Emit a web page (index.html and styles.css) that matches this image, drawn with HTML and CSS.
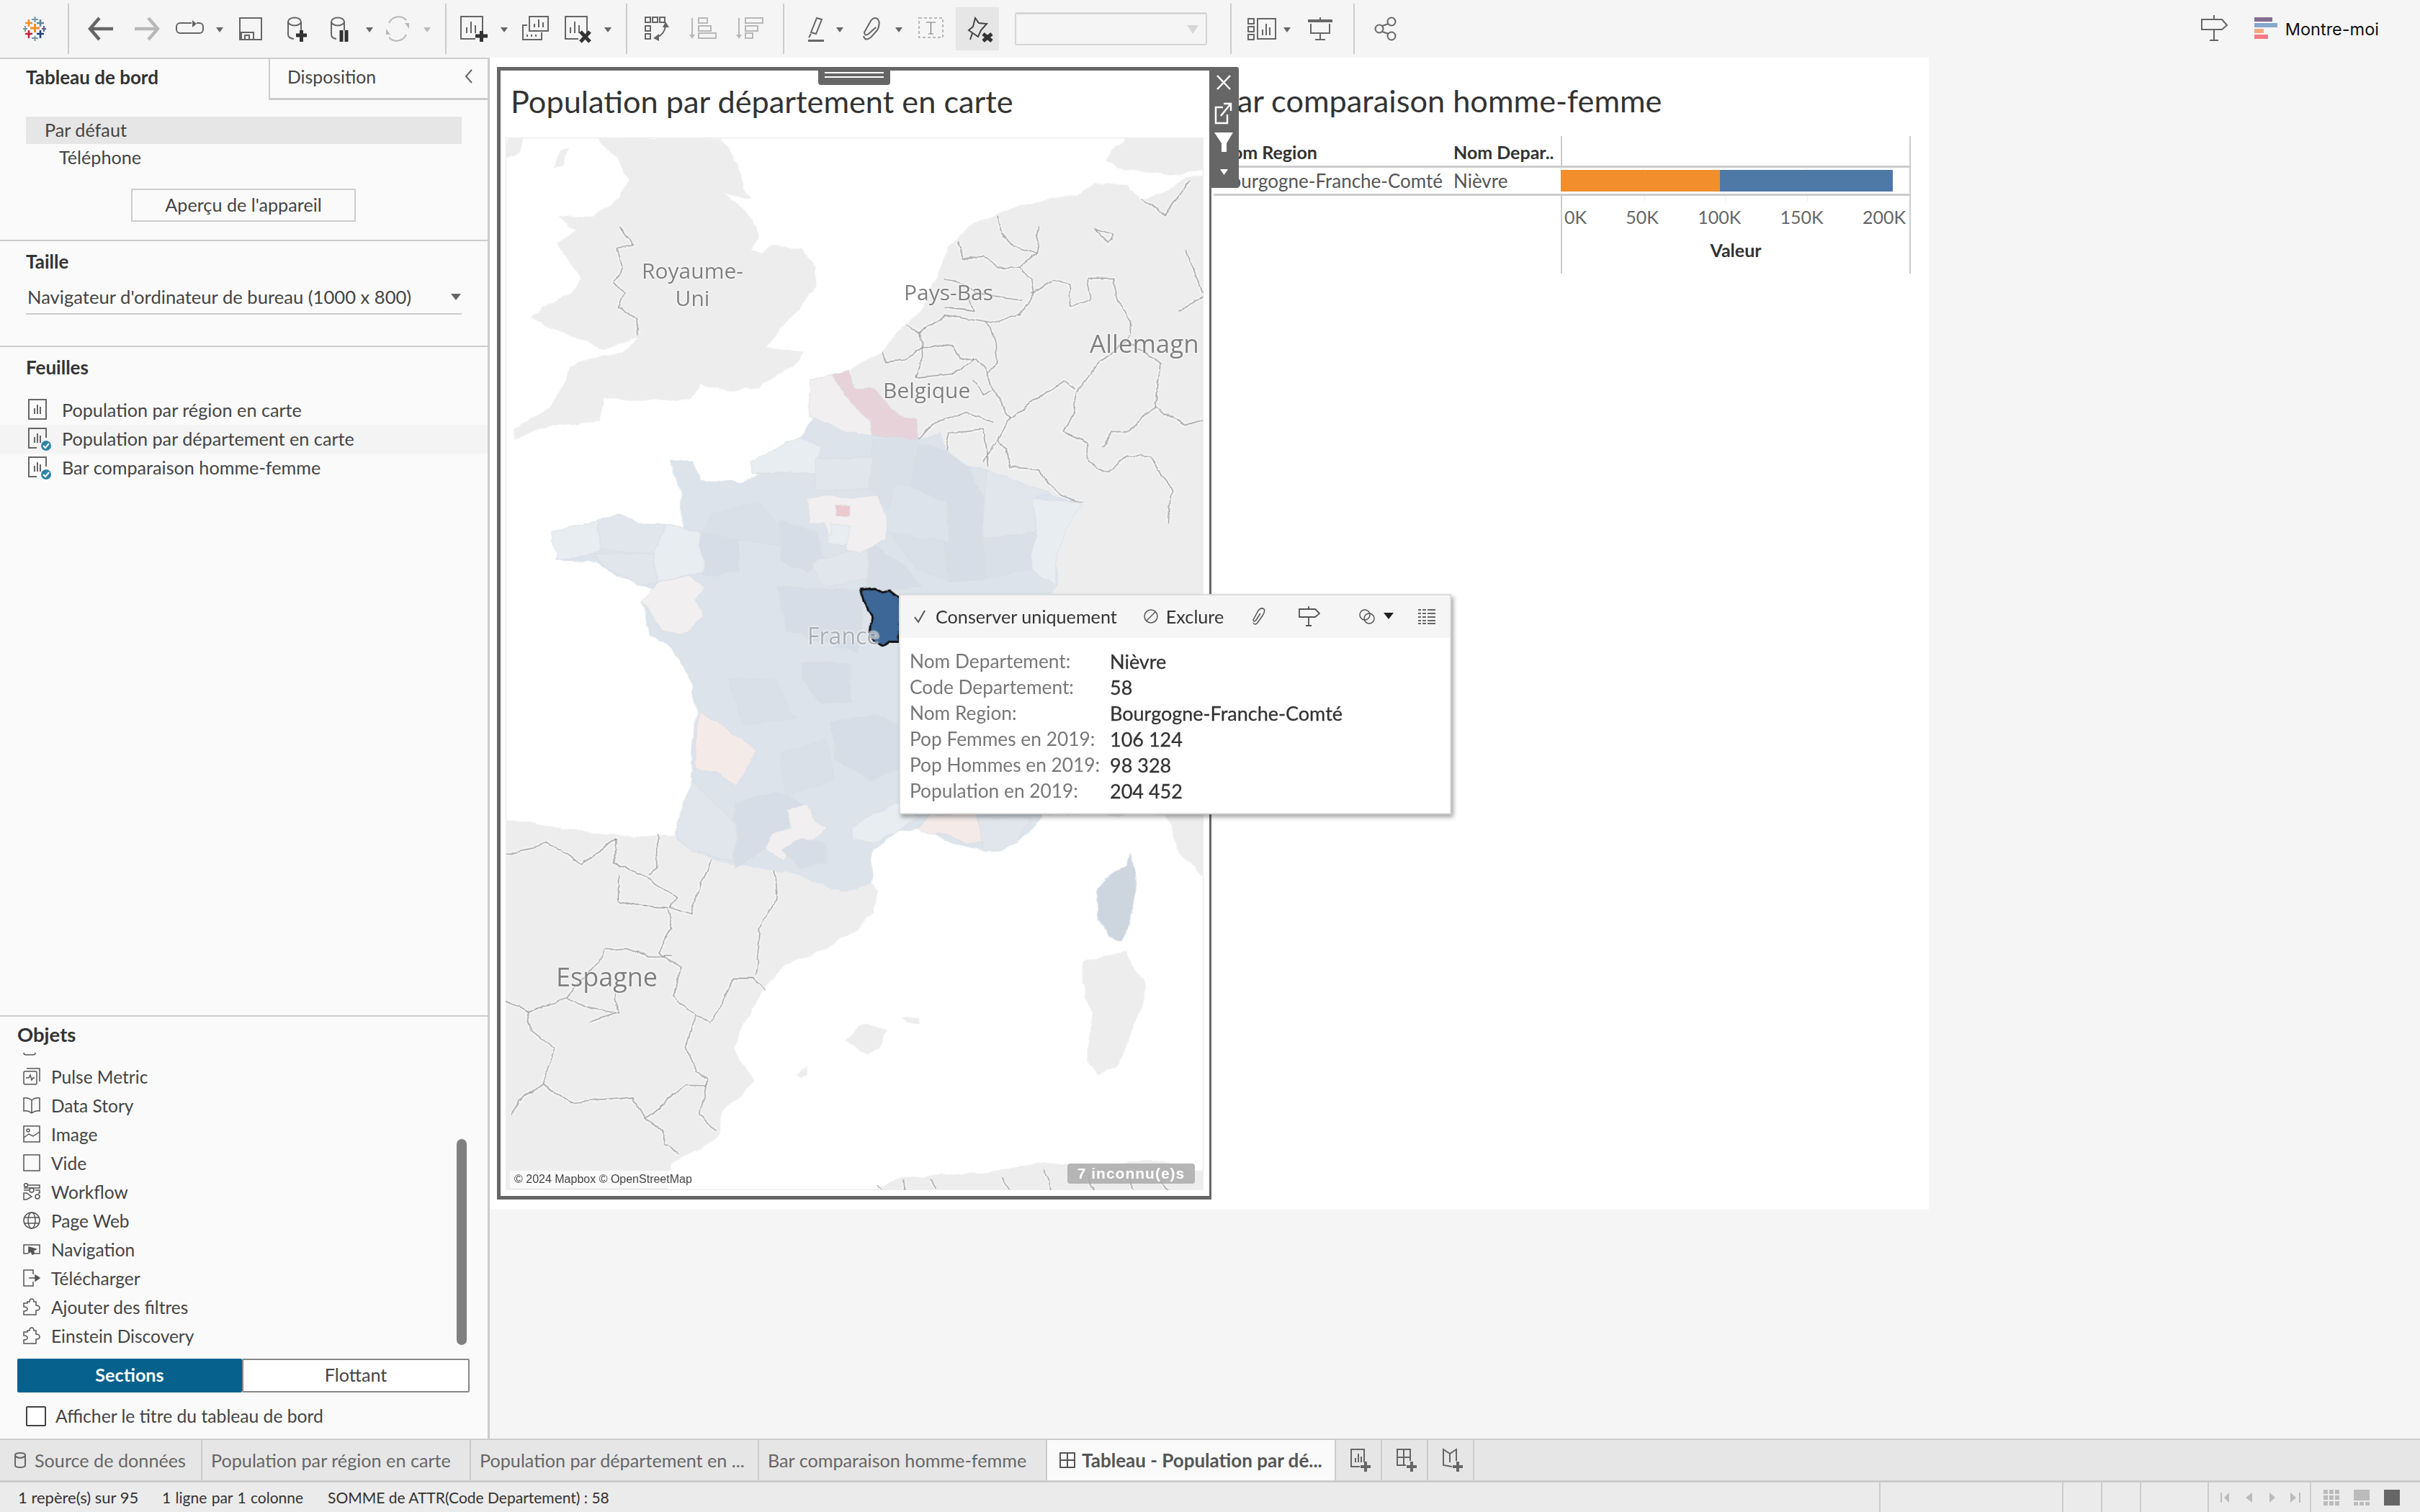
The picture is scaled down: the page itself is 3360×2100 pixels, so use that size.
FILE: index.html
```html
<!DOCTYPE html>
<html lang="fr">
<head>
    <meta charset="UTF-8">
    <title>Tableau - Population par département</title>
    <link rel="stylesheet" href="styles.css">
</head>
<body>
    <!-- barre d'outils -->
    <div class="toolbar">
        <svg width="94" height="80" viewBox="0 0 94 80">
            <path d="M42 39H55M48.500 33V45" stroke="#f28e2b" stroke-width="3" fill="none"/>
            <path d="M35 32H45M40 27V37" stroke="#f28e2b" stroke-width="2.500" fill="none"/>
            <path d="M51 32H61M56 27V37" stroke="#5b879b" stroke-width="2.500" fill="none"/>
            <path d="M44 27H53M48.500 23V31" stroke="#7099a6" stroke-width="2" fill="none"/>
            <path d="M32 40H38M35 36V44" stroke="#7099a6" stroke-width="2" fill="none"/>
            <path d="M58 40H64M61 36V44" stroke="#59598f" stroke-width="2" fill="none"/>
            <path d="M35 47H45M40 42V53" stroke="#c72037" stroke-width="2.500" fill="none"/>
            <path d="M51 47H61M56 42V53" stroke="#1f447e" stroke-width="2.500" fill="none"/>
            <path d="M44 53H53M48.500 50V57" stroke="#7099a6" stroke-width="2" fill="none"/>
        </svg>
        <i class="sep"></i>
        <svg class="ic" width="76" height="80" viewBox="0 0 76 80"><path d="M61 40H29M42 25L29 40L42 55" stroke-width="4.500"/></svg>
        <svg class="ic off" width="64" height="80" viewBox="0 0 64 80"><path d="M15 40H47M34 25L47 40L34 55" stroke-width="4.500"/></svg>
        <svg class="ic" width="60" height="80" viewBox="0 0 60 80"><path d="M30 32H14a5 5 0 0 0-5 5v4a5 5 0 0 0 5 5h27a5 5 0 0 0 5-5v-4a5 5 0 0 0-5-5h-4"/><path class="fill" d="M31 28L37 33L31 38Z"/></svg>
        <svg class="caret" width="26" height="80" viewBox="0 0 26 80"><path d="M4 38H14L9 45Z"/></svg>
        <svg class="ic" width="66" height="80" viewBox="0 0 66 80"><rect x="11" y="25" width="30" height="30"/><path d="M13 54V45H30V54M18 54V49H24V54"/></svg>
        <svg class="ic" width="60" height="80" viewBox="0 0 60 80"><ellipse cx="21" cy="30" rx="9" ry="5.500"/><path d="M12 30V48Q12 53 20 54M30 30V42"/><path class="plus" d="M23 49H38M30.500 42V58"/></svg>
        <svg class="ic" width="54" height="80" viewBox="0 0 54 80"><ellipse cx="21" cy="30" rx="9" ry="5.500"/><path d="M12 30V48Q12 53 19 54M30 30V42"/><path class="plus" d="M26 42V58M33 42V58"/></svg>
        <svg class="caret" width="24" height="80" viewBox="0 0 24 80"><path d="M6 38H16L11 45Z"/></svg>
        <svg class="ic off" width="56" height="80" viewBox="0 0 56 80"><path d="M14 32A15 16 0 0 1 38 28M38 48A15 16 0 0 1 14 52"/><path class="fill" d="M36 32H42V40ZM16 48H10V40Z"/></svg>
        <svg class="caret off" width="36" height="80" viewBox="0 0 36 80"><path d="M6 38H16L11 45Z"/></svg>
        <i class="sep"></i>
        <svg class="ic" width="69" height="80" viewBox="0 0 69 80"><path d="M50 48V23H20V54H40M28 46V38M34 46V30M40 46V35"/><path class="plus" d="M40 50H57M48.500 43V58"/></svg>
        <svg class="caret" width="26" height="80" viewBox="0 0 26 80"><path d="M6 38H16L11 45Z"/></svg>
        <svg class="ic" width="60" height="80" viewBox="0 0 60 80"><rect x="20" y="23" width="26" height="20"/><path d="M27 38V33M33 38V27M39 38V31M17 35H11V55H37V45M17 48V51M23 48V51M29 48V51"/></svg>
        <svg class="ic" width="58" height="80" viewBox="0 0 58 80"><path d="M40 46V23H10V54H28M17 46V38M23 46V30M29 46V35"/><path class="plus" d="M31 44L44 58M44 44L31 58"/></svg>
        <svg class="caret" width="36" height="80" viewBox="0 0 36 80"><path d="M6 38H16L11 45Z"/></svg>
        <i class="sep"></i>
        <svg class="ic" width="77" height="80" viewBox="0 0 77 80"><rect x="25" y="24" width="7" height="7"/><rect x="35" y="24" width="7" height="7"/><rect x="45" y="24" width="7" height="7"/><rect x="25" y="36" width="7" height="7"/><rect x="25" y="47" width="7" height="7"/><path d="M53 36Q52 47 41 52"/><path class="fill" d="M49 38L53 30L58 38ZM44 47L36 53L44 57Z"/></svg>
        <svg class="ic off" width="65" height="80" viewBox="0 0 65 80"><path d="M13 25V52"/><path class="fill" d="M9 48H17L13 54Z"/><rect x="22" y="25" width="12" height="7"/><rect x="22" y="36" width="17" height="7"/><rect x="22" y="46" width="24" height="7"/></svg>
        <svg class="ic off" width="74" height="80" viewBox="0 0 74 80"><path d="M13 25V52"/><path class="fill" d="M9 48H17L13 54Z"/><rect x="22" y="25" width="24" height="7"/><rect x="22" y="36" width="17" height="7"/><rect x="22" y="46" width="10" height="7"/></svg>
        <i class="sep"></i>
        <svg class="ic" width="68" height="80" viewBox="0 0 68 80"><path d="M45 25L52 27L44 47L37 45ZM37 47L34 52"/><path class="fill" d="M33 55H55V58H33Z"/></svg>
        <svg class="caret" width="26" height="80" viewBox="0 0 26 80"><path d="M4 38H14L9 45Z"/></svg>
        <svg class="ic" width="54" height="80" viewBox="0 0 54 80"><path d="M33 38L23 47Q18 51 17 45L26 29Q31 22 36 27Q40 32 35 42L26 52Q18 58 16 50"/></svg>
        <svg class="caret" width="26" height="80" viewBox="0 0 26 80"><path d="M6 38H16L11 45Z"/></svg>
        <svg class="ic dash" width="64" height="80" viewBox="0 0 64 80"><rect x="13" y="25" width="33" height="27"/><path class="thin" d="M23 31H36M29.500 31V47M26 47H33"/></svg>
        <div class="pin-on">
            <svg class="ic" width="60" height="60" viewBox="0 10 60 60"><path d="M27 25L32 32L43 33L35 42L31 51L18 42L24 37ZM23 46L20 55" stroke="#444"/><path class="plus" d="M38 47L50 57M50 47L38 57" stroke-width="4.500" stroke="#111"/></svg>
        </div>
        <div class="tb-select"><svg width="16" height="12" viewBox="0 0 16 12"><path d="M0 0H16L8 12Z" fill="#d6d6d6"/></svg></div>
        <i class="sep after-select"></i>
        <svg class="ic" width="69" height="80" viewBox="0 0 69 80"><rect x="23" y="26" width="8" height="7"/><rect x="23" y="37" width="8" height="7"/><rect x="23" y="48" width="8" height="7"/><rect x="36" y="26" width="25" height="28"/><path d="M43 49V41M48 49V33M53 49V38"/></svg>
        <svg class="caret" width="22" height="80" viewBox="0 0 22 80"><path d="M3 38H13L8 45Z"/></svg>
        <svg class="ic" width="78" height="80" viewBox="0 0 78 80"><path d="M32 24V28M19 33V46H45V33M32 46V55M25 55H39"/><path class="fill" d="M15 27H49V31H15Z"/></svg>
        <i class="sep"></i>
        <svg class="ic" width="70" height="80" viewBox="0 0 70 80"><circle cx="51" cy="30" r="5.500"/><circle cx="51" cy="50" r="5.500"/><circle cx="34" cy="40" r="5.500"/><path d="M38 36L47 33M38 44L47 47"/></svg>
        <div class="tb-right">
            <svg class="ic" width="38" height="40" viewBox="0 0 38 40"><path d="M18 1V7M1 7H29L36 15L29 21H1ZM18 21V36M12 36H24"/></svg>
            <svg class="showme" width="34" height="32" viewBox="0 0 34 32"><rect y="0" width="25" height="6" fill="#856d94"/><rect y="8" width="32" height="6" fill="#86a8cb"/><rect y="16" width="13" height="6" fill="#f3a97d"/><rect y="24" width="19" height="6" fill="#f87886"/></svg>
            <span>Montre-moi</span>
        </div>
    </div>

    <div class="middle">
        <!-- panneau gauche -->
        <div class="panel">
            <div class="panel-tabs">
                <div class="ptab bold">Tableau de bord</div>
                <div class="ptab other">Disposition
                    <svg width="12" height="20" viewBox="0 0 12 20"><path d="M10 1L2 10L10 19" fill="none" stroke="#666" stroke-width="2"/></svg>
                </div>
            </div>
            <div class="sec sec-device">
                <div class="dev dev-on">Par défaut</div>
                <div class="dev dev-phone">Téléphone</div>
                <div class="preview-btn">Aperçu de l'appareil</div>
            </div>
            <div class="sec sec-size">
                <div class="sec-title">Taille</div>
                <div class="size-select">Navigateur d'ordinateur de bureau (1000 x 800)
                    <svg width="14" height="9" viewBox="0 0 14 9"><path d="M0 0H14L7 9Z" fill="#666"/></svg>
                </div>
            </div>
            <div class="sec sec-sheets">
                <div class="sec-title">Feuilles</div>
                <div class="sheet-list">
                    <div class="sheet-row">
                        <svg class="sheet-ic" width="47" height="34" viewBox="0 0 47 34"><rect x="1" y="3" width="24" height="27"/><path d="M9 23V15M13 23V10M17 23V13"/></svg>
                        Population par région en carte
                    </div>
                    <div class="sheet-row sheet-hover">
                        <svg class="sheet-ic" width="47" height="34" viewBox="0 0 47 34"><path d="M25 16V3H1V30H12M9 23V15M13 23V10M17 23V13"/><circle class="badge" cx="25" cy="27" r="7"/><path class="badge-check" d="M21 27L24 30L29 24"/></svg>
                        Population par département en carte
                    </div>
                    <div class="sheet-row">
                        <svg class="sheet-ic" width="47" height="34" viewBox="0 0 47 34"><path d="M25 16V3H1V30H12M9 23V15M13 23V10M17 23V13"/><circle class="badge" cx="25" cy="27" r="7"/><path class="badge-check" d="M21 27L24 30L29 24"/></svg>
                        Bar comparaison homme-femme
                    </div>
                </div>
            </div>
            <div class="objets">
                <div class="objets-title">Objets</div>
                <div class="obj-list">
                    <div class="obj-row obj-cut"><svg class="obj-ic" viewBox="0 0 24 24"><rect x="1" y="6" width="16" height="16" rx="3"/></svg></div>
                    <div class="obj-row"><svg class="obj-ic" viewBox="0 0 24 24"><rect x="1" y="5" width="18" height="18" rx="2"/><path d="M5 1H23V19M4 14H8L10 10L12 17L14 14H16"/></svg>Pulse Metric</div>
                    <div class="obj-row"><svg class="obj-ic" viewBox="0 0 24 24"><path d="M12 5Q7 1 1 2V20Q7 19 12 23Q17 19 23 20V2Q17 1 12 5V23"/></svg>Data Story</div>
                    <div class="obj-row"><svg class="obj-ic" viewBox="0 0 24 24"><rect x="1" y="1" width="22" height="22"/><circle cx="7" cy="7" r="2"/><path d="M1 17L8 12L14 15L23 9"/></svg>Image</div>
                    <div class="obj-row"><svg class="obj-ic" viewBox="0 0 24 24"><rect x="1" y="1" width="22" height="22"/></svg>Vide</div>
                    <div class="obj-row"><svg class="obj-ic" viewBox="0 0 24 24"><circle cx="4" cy="3" r="2.500"/><path d="M7 3H23V7H1M1 10H8M17 10H23V14H21"/><circle cx="12" cy="10" r="3"/><path d="M1 14H5L12 19L5 23H1Z"/><circle cx="20" cy="19" r="3"/></svg>Workflow</div>
                    <div class="obj-row"><svg class="obj-ic" viewBox="0 0 24 24"><circle cx="12" cy="12" r="11"/><ellipse cx="12" cy="12" rx="5" ry="11"/><path d="M1 8H23M1 16H23"/></svg>Page Web</div>
                    <div class="obj-row"><svg class="obj-ic" viewBox="0 0 24 24"><path d="M7 18H1V6H23V18H17"/><path d="M8 9L18 12L14 14L16 18L13 19L11 15L8 17Z" fill="#555"/></svg>Navigation</div>
                    <div class="obj-row"><svg class="obj-ic" viewBox="0 0 24 24"><path d="M14 7V1H1V23H14V17M8 12H18"/><path d="M17 8L23 12L17 16Z" fill="#555"/></svg>Télécharger</div>
                    <div class="obj-row"><svg class="obj-ic" viewBox="0 0 24 24"><path d="M6 5H9Q9 1 12 1Q15 1 15 5H18V10Q23 10 23 14Q23 17 18 17V23H1V18Q6 18 6 15Q6 12 1 12V7H6Z"/></svg>Ajouter des filtres</div>
                    <div class="obj-row"><svg class="obj-ic" viewBox="0 0 24 24"><path d="M6 5H9Q9 1 12 1Q15 1 15 5H18V10Q23 10 23 14Q23 17 18 17V23H1V18Q6 18 6 15Q6 12 1 12V7H6Z"/></svg>Einstein Discovery</div>
                    <div class="obj-scroll"></div>
                </div>
                <div class="seg">
                    <div class="seg-on">Sections</div>
                    <div class="seg-off">Flottant</div>
                </div>
                <div class="check-row"><i class="checkbox"></i>Afficher le titre du tableau de bord</div>
            </div>
        </div>

        <!-- tableau de bord -->
        <div class="canvas">
            <div class="dashboard">
                <div class="zone zone-map">
                    <div class="sheet-title map-title">Population par département en carte</div>
                    <div class="map">
                        <svg class="map-svg" viewBox="33 217 1457 2866" preserveAspectRatio="none">
                            <defs>
                                <filter id="rough" filterUnits="userSpaceOnUse" x="33" y="217" width="1457" height="2866" color-interpolation-filters="sRGB">
                                    <feTurbulence type="fractalNoise" baseFrequency="0.025 0.02" numOctaves="4" seed="4" result="n"/>
                                    <feDisplacementMap in="SourceGraphic" in2="n" scale="16" xChannelSelector="R" yChannelSelector="G"/>
                                </filter>
                                <g id="borders" class="borders" fill="none">
                                    <path d="M270 460L300 510L265 520L275 570L260 610L280 640L270 680L305 710L308 755"/>
                                    <path d="M1060 430L1070 480L1090 510L1140 530L1150 460M1140 530L1105 570L1130 600L1135 640L1110 700L1040 720L1055 770L1060 830L1040 860L1050 900L1075 960L1085 980L1060 1040L1075 1065L1090 1115L1150 1120L1165 1160L1190 1190L1235 1210"/>
                                    <path d="M975 500L990 550L1030 535L1060 570L1105 570M945 600L1050 650L1110 660M950 680L1010 690L1000 650"/>
                                    <path d="M820 800L825 830L865 825L900 790L930 780L965 785L980 820L1010 815L1030 840L1040 860M1040 720L950 700L900 745L870 730M900 745L900 830L890 870L970 860L1010 815M1010 880L1030 920L1050 905M895 1040L930 990L960 980L995 965L1050 990M950 1070L960 1020L1030 1010L1040 1110M1060 1040L1030 1100"/>
                                    <path d="M1130 640L1180 605L1210 620L1215 675L1250 660L1250 600L1300 600L1310 660L1340 720L1330 770L1270 830L1230 900L1220 960L1200 1020L1250 1050L1250 1100L1290 1130L1330 1080L1380 1085L1425 1180L1420 1270"/>
                                    <path d="M1085 980L1130 940L1200 880L1225 900M1330 770L1400 830L1390 950L1330 1020L1300 1020L1280 1060M1390 950L1450 1000L1490 985M1440 690L1490 650L1470 580L1450 530M1260 465L1300 480L1290 505L1260 465M1365 385L1410 430L1460 340"/>
                                    <g transform="translate(0,1568)">
                                        <path d="M33 600L100 580L120 565L160 600L190 630L210 610L260 560L260 620L300 650L330 670L390 720L375 745L420 765L440 680L465 615M270 660L270 730L300 740L370 745L380 800L350 870L400 910L380 985L430 1040L460 1060L510 940L550 940L575 970M595 625L600 720L565 800L555 930M350 550L350 640L330 660"/>
                                        <path d="M240 860L285 855L330 880L380 880M240 860L230 890L160 990L80 1030L33 995M80 1030L85 1080L135 1130L110 1225L60 1270L50 1310M110 1225L170 1275L300 1260L325 1320L365 1350L365 1390L395 1415M325 1320L410 1230L450 1230L440 1310L470 1350M430 1040L410 1130L430 1190L455 1210L450 1230M265 980L270 1030L205 1055M160 990L210 1020L265 1030"/>
                                        <path d="M810 1500L820 1515M860 1490L870 1515M920 1485L930 1515M1070 1480L1085 1515M1160 1460L1170 1515M1250 1470L1260 1515M1330 1470L1345 1515M1400 1490L1420 1515"/>
                                    </g>
                                </g>
                            </defs>
                            <g class="rough">
                            <!-- terres -->
                            <g class="land">
                                <path d="M225 217L480 217L500 250L520 300L530 350L545 385L490 370L520 400L550 440L560 490L545 520L570 530L590 510L650 520L680 570L680 620L650 680L610 730L580 790L655 800L650 830L600 860L560 900L500 905L440 890L420 930L360 930L300 930L240 930L230 990L150 1000L90 1015L50 1040L50 1010L130 950L150 900L170 840L220 815L280 800L310 760L240 795L180 760L130 740L85 710L110 680L170 640L190 600L170 560L140 510L180 470L140 430L220 430L270 380L290 330L260 270Z"/>
                                <path d="M33 217H70L60 260L33 270ZM150 250L165 245L155 290L130 300Z"/>
                                <path d="M670 880L750 850L820 800L860 735L900 690L930 600L960 510L1000 460L1060 425L1130 395L1230 370L1260 345L1330 345L1365 385L1400 370L1450 330L1500 320V2248L1480 2218L1440 2168L1410 2060L1150 2060L900 1400Z"/>
                                <path d="M1285 280L1300 250L1330 210H1500V300L1440 320L1350 310L1310 300Z"/>
                            </g>
                            <g class="land" transform="translate(0,1568)">
                                <path d="M20 505L100 520L200 540L330 555L385 550L600 620L800 680L810 700L805 760L760 810L700 860L620 900L570 970L530 1060L510 1130L550 1220L490 1300L470 1380L380 1440L370 1530H20Z"/>
                                <path d="M770 1530L860 1480L1000 1470L1070 1460L1140 1440L1300 1450L1380 1430L1500 1470V1530Z"/>
                                <path d="M1240 890L1330 865L1370 960L1350 1060L1310 1180L1270 1200L1245 1160L1260 1040L1235 950Z"/>
                                <path d="M740 1105L780 1060L830 1080L815 1130L790 1145ZM860 1040L895 1045L895 1065L870 1055ZM640 1200L665 1178L665 1200L650 1210Z"/>
                            </g>
                            <use href="#borders" class="halo"/>
                            <use href="#borders" class="line"/>
                            <!-- France -->
                            <path class="fr fr-base" d="M670 880L715 862L750 850L760 900L800 900L850 970L890 985L895 1040L940 1015L950 1070L1000 1110L1040 1120L1100 1150L1170 1190L1235 1210L1210 1270L1180 1350L1185 1430L1170 1470L1160 1700L1150 2068L1110 2128L1060 2158L1030 2158L960 2138L900 2098L850 2108L800 2158L795 2248L740 2268L700 2258L650 2228L590 2208L500 2198L420 2158L385 2123L410 2068L420 1968L430 1778L415 1678L370 1598L330 1568L320 1480L340 1450L250 1400L225 1370L135 1370L160 1320L130 1290L225 1260L270 1240L310 1270L400 1290L400 1200L375 1090L420 1100L440 1150L520 1155L560 1135L545 1130L545 1100L650 1030L670 980Z"/>
                            <g class="fr">
                                <path class="t-dark" d="M880 1130L900 1050L950 1070L1000 1110L1030 1200L1030 1310L960 1320L950 1210L880 1170Z"/>
                                <path class="t-mid" d="M800 1040L895 1040L880 1130L880 1170L850 1160L830 1230L790 1165Z"/>
                                <path class="t-dark" d="M605 1260L680 1290L700 1370L660 1400L610 1370Z"/>
                                <path class="t-dark" d="M440 1295L520 1310L520 1400L445 1410Z"/>
                                <path class="t-dark" d="M790 1320L870 1390L900 1440L790 1450Z"/>
                                <path class="t-dark" d="M950 1320L1030 1310L1030 1420L960 1430Z"/>
                                <path class="t-mid" d="M830 1290L950 1320L960 1430L890 1390Z"/>
                                <path class="t-mid" d="M1030 1310L1140 1290L1130 1390L1030 1420Z"/>
                                <path class="t-mid" d="M465 1240L560 1210L610 1280L605 1330L520 1310L440 1295Z"/>
                                <path class="t-light" d="M1040 1120L1100 1150L1170 1190L1130 1200L1140 1290L1030 1310L1030 1200Z"/>
                                <path class="t-pale" d="M1130 1200L1235 1210L1210 1270L1180 1350L1180 1440L1130 1390L1140 1290Z"/>
                                <path class="t-pale" d="M545 1130L545 1100L650 1030L690 1060L680 1130Z"/>
                                <path class="t-light" d="M680 1090L800 1090L790 1170L680 1180Z"/>
                                <path class="t-light" d="M670 1380L790 1320L790 1420L700 1440Z"/>
                                <path class="t-white" d="M660 1200L720 1190L750 1200L810 1190L830 1250L825 1310L775 1350L745 1340L750 1320L705 1325L700 1270L670 1270Z"/>
                                <path class="t-pale" d="M710 1270L750 1270L750 1325L705 1325Z"/>
                                <path class="t-pink2" d="M722 1220L750 1220L750 1245L722 1245Z"/>
                                <path class="t-white" d="M670 880L715 862L740 920L795 990L800 1030L740 1015L700 995L665 975Z"/>
                                <path class="t-pink" d="M715 862L750 850L760 900L800 900L850 970L890 985L895 1040L800 1030L795 990L740 920Z"/>
                                <path class="t-pale" d="M130 1290L225 1260L230 1340L220 1350L140 1370Z"/>
                                <path class="t-light" d="M225 1260L270 1240L310 1270L370 1270L360 1340L340 1350L230 1340Z"/>
                                <path class="t-pale" d="M370 1270L440 1295L445 1400L350 1430L340 1350Z"/>
                                <path class="t-light" d="M220 1350L340 1350L350 1430L320 1440L245 1390Z"/>
                                <path class="t-white" d="M350 1430L420 1410L450 1440L430 1480L450 1520L400 1570L360 1560L320 1480Z"/>
                                <path class="t-dark" d="M600 1440L780 1450L770 1620L620 1560Z"/>
                            </g>
                            <g class="fr" transform="translate(0,1568)">
                                <path class="t-dark" d="M650 80L750 80L755 190L690 190L650 120Z"/>
                                <path class="t-mid" d="M500 120L600 130L640 230L530 250Z"/>
                                <path class="t-dark" d="M715 240L800 220L860 250L880 350L800 400L720 340Z"/>
                                <path class="t-mid" d="M610 320L700 290L720 400L620 440Z"/>
                                <path class="t-dark" d="M510 460L610 430L660 470L620 530L590 545L575 585L510 640Z"/>
                                <path class="t-light" d="M420 400L515 520L510 620L420 590L385 550Z"/>
                                <path class="t-white2" d="M435 210L470 240L540 300L555 320L530 390L510 415L480 380L430 370Z"/>
                                <path class="t-white" d="M620 480L660 465L680 510L705 530L660 570L620 590L610 620L575 585L590 545L630 530Z"/>
                                <path class="t-dark" d="M610 590L650 555L700 570L700 620L650 640Z"/>
                                <path class="t-pale" d="M755 530L800 490L860 460L890 500L850 540L800 570L760 560Z"/>
                                <path class="t-white2" d="M895 530L920 495L1020 490L1025 570L990 570L960 550L920 545Z"/>
                                <path class="t-light" d="M1025 500L1130 500L1100 570L1060 590L1030 590L1020 560Z"/>
                                <path class="t-corse" d="M1335 600L1345 640L1350 700L1340 760L1320 840L1290 820L1270 770L1265 700L1300 650L1330 630Z"/>
                            </g>
                            <path class="nievre" d="M778 1450L805 1446L820 1456L835 1450L855 1470L855 1590L835 1590L820 1598L800 1585L793 1560L796 1530L790 1500L785 1480Z"/>
                            </g>
                        </svg>
                        <span class="map-label l-uk">Royaume-<br>Uni</span>
                        <span class="map-label l-nl">Pays-Bas</span>
                        <span class="map-label l-be">Belgique</span>
                        <span class="map-label l-de">Allemagn</span>
                        <span class="map-label l-fr">France</span>
                        <span class="map-label l-es">Espagne</span>
                        <span class="map-credit">© 2024 Mapbox © OpenStreetMap</span>
                        <span class="map-unknown">7 inconnu(e)s</span>
                    </div>
                    <div class="zone-handle"><i></i><i></i></div>
                    <div class="zone-tools">
                        <svg width="40" height="168" viewBox="0 0 40 168">
                            <path d="M11 12L29 31M29 12L11 31" stroke="#fff" stroke-width="2.500" fill="none"/>
                            <path d="M19 56H9V78H25V66M16 68L29 52M20 51H30V61" stroke="#fff" stroke-width="2.500" fill="none"/>
                            <path d="M7 91H33L24 106V118H17V106Z" fill="#fff"/>
                            <path d="M15 142H26L20.500 150Z" fill="#fff"/>
                        </svg>
                    </div>
                </div>
                <div class="zone zone-bar">
                    <div class="sheet-title bar-title">Bar comparaison homme-femme</div>
                    <div class="viz">
                        <div class="viz-head">
                            <div class="col-region head-cell">Nom Region</div>
                            <div class="col-dep head-cell">Nom Depar..</div>
                            <div class="col-chart"></div>
                        </div>
                        <div class="viz-row">
                            <div class="col-region">Bourgogne-Franche-Comté</div>
                            <div class="col-dep">Nièvre</div>
                            <div class="col-chart bar-cell">
                                <i class="tick t1"></i><i class="tick t2"></i><i class="tick t3"></i>
                                <div class="bar bar-f"></div>
                                <div class="bar bar-m"></div>
                            </div>
                        </div>
                        <div class="viz-axis">
                            <div class="col-region"></div>
                            <div class="col-dep"></div>
                            <div class="col-chart axis-cell">
                                <i class="tick short t1"></i><i class="tick short t2"></i><i class="tick short t3"></i>
                                <div class="axis-labels"><span>0K</span><span>50K</span><span>100K</span><span>150K</span><span>200K</span></div>
                                <div class="axis-title">Valeur</div>
                            </div>
                        </div>
                    </div>
                </div>
                <!-- infobulle -->
                <div class="tip">
                    <div class="tip-head">
                        <span class="tip-act"><svg width="18" height="20" viewBox="0 0 18 20"><path d="M2 11L7 18L16 2" fill="none" stroke="#555" stroke-width="2"/></svg>Conserver uniquement</span>
                        <span class="tip-act act-ex"><svg width="22" height="22" viewBox="0 0 22 22"><circle cx="11" cy="11" r="9" fill="none" stroke="#555" stroke-width="1.500"/><path d="M5 17L17 5" stroke="#555" stroke-width="1.500"/></svg>Exclure</span>
                        <svg class="ti clip" width="20" height="26" viewBox="0 0 20 26"><path d="M12 9L6 18Q3 22 2 18L9 5Q13 0 17 3Q19 6 15 12L8 22Q4 26 2 22" fill="none" stroke="#555" stroke-width="1.500"/></svg>
                        <svg class="ti sign" width="30" height="30" viewBox="0 0 30 30"><path d="M14 1V5M1 5H23L29 11L23 16H1ZM14 16V28M10 28H18" fill="none" stroke="#555" stroke-width="1.800"/></svg>
                        <svg class="ti link" width="24" height="24" viewBox="0 0 24 24"><circle cx="9" cy="10" r="7" fill="none" stroke="#555" stroke-width="1.500"/><circle cx="15" cy="15" r="7" fill="none" stroke="#555" stroke-width="1.500"/></svg>
                        <svg class="ti carets" width="14" height="9" viewBox="0 0 14 9"><path d="M0 0H14L7 9Z" fill="#222"/></svg>
                        <svg class="ti table" width="24" height="22" viewBox="0 0 24 22"><path d="M0 2H4M6 2H11M13 2H24M0 7H4M6 7H11M13 7H24M0 12H4M6 12H11M13 12H24M0 17H4M6 17H11M13 17H24M0 21H4M6 21H11M13 21H24" stroke="#666" stroke-width="2"/></svg>
                    </div>
                    <div class="tip-body">
                        <div class="tip-k">Nom Departement:</div><div class="tip-v">Nièvre</div>
                        <div class="tip-k">Code Departement:</div><div class="tip-v">58</div>
                        <div class="tip-k">Nom Region:</div><div class="tip-v">Bourgogne-Franche-Comté</div>
                        <div class="tip-k">Pop Femmes en 2019:</div><div class="tip-v">106 124</div>
                        <div class="tip-k">Pop Hommes en 2019:</div><div class="tip-v">98 328</div>
                        <div class="tip-k">Population en 2019:</div><div class="tip-v">204 452</div>
                    </div>
                </div>
            </div>
        </div>
    </div>

    <!-- onglets -->
    <div class="tabs">
        <div class="tab tab-src"><svg width="18" height="24" viewBox="0 0 18 24"><path d="M2 5Q2 2 9 2Q16 2 16 5V19Q16 22 9 22Q2 22 2 19ZM2 6Q5 9 9 9Q13 9 16 6" fill="none" stroke="#666" stroke-width="2"/></svg>Source de données</div>
        <div class="tab tab-a">Population par région en carte</div>
        <div class="tab tab-b">Population par département en ...</div>
        <div class="tab tab-b">Bar comparaison homme-femme</div>
        <div class="tab tab-active"><svg width="24" height="24" viewBox="0 0 24 24"><path d="M2 2H22V22H2ZM2 12H22M12 2V22" fill="none" stroke="#555" stroke-width="2"/></svg>Tableau - Population par dé...</div>
        <div class="tab tab-new"><svg width="32" height="34" viewBox="0 0 32 34"><path d="M20 20V2H2V26H14M8 20V14M12 20V8M16 20V12" fill="none" stroke="#666" stroke-width="2"/><path d="M15 26H29M22 19V33" stroke="#666" stroke-width="4"/></svg></div>
        <div class="tab tab-new"><svg width="32" height="34" viewBox="0 0 32 34"><path d="M20 18V2H2V24H14M2 13H20M11 2V24" fill="none" stroke="#666" stroke-width="2"/><path d="M15 26H29M22 19V33" stroke="#666" stroke-width="4"/></svg></div>
        <div class="tab tab-new"><svg width="32" height="34" viewBox="0 0 32 34"><path d="M20 18V2L11 8L2 2V24L14 26M11 8V20" fill="none" stroke="#666" stroke-width="2"/><path d="M15 26H29M22 19V33" stroke="#666" stroke-width="4"/></svg></div>
    </div>

    <!-- barre d'etat -->
    <div class="status">
        <div class="status-text">
            <span class="st1">1 repère(s) sur 95</span>
            <span class="st2">1 ligne par 1 colonne</span>
            <span class="st3">SOMME de ATTR(Code Departement) : 58</span>
        </div>
        <div class="st-cell c1"></div>
        <div class="st-cell c2"></div>
        <div class="st-cell c2"></div>
        <div class="st-cell c3"></div>
        <div class="st-cell c4">
            <svg width="112" height="16" viewBox="0 0 112 16" fill="#bbb"><path d="M0 1H2V15H0ZM12 1V15L5 8ZM44 1V15L35 8ZM68 1V15L76 8ZM97 1V15L105 8ZM109 1H111V15H109Z"/></svg>
        </div>
        <div class="st-cell c5">
            <svg width="108" height="24" viewBox="0 0 108 24">
                <path fill="#bbb" d="M0 1H6V7H0ZM8 1H14V7H8ZM16 1H22V7H16ZM0 9H6V15H0ZM8 9H14V15H8ZM16 9H22V15H16ZM0 17H6V23H0ZM8 17H14V23H8ZM16 17H22V23H16Z"/>
                <path fill="#bbb" d="M42 1H64V16H42ZM42 18H48V23H42ZM50 18H56V23H50ZM58 18H64V23H58Z"/>
                <rect x="84" y="1" width="22" height="22" fill="#666"/>
            </svg>
        </div>
    </div>
</body>
</html>
```

FILE: styles.css
```css
* {
    box-sizing: border-box;
}

html, body {
    margin: 0;
    height: 100%;
}

body {
    width: 3360px;
    height: 2100px;
    overflow: hidden;
    background: #f5f5f5;
    font-family: Lato, 'Noto Sans', sans-serif;
    font-size: 25.200px;
    color: #444;
    display: flex;
    flex-direction: column;
}

svg {
    display: block;
    flex: none;
}

/* toolbar */
.toolbar {
    height: 80px;
    flex: none;
    display: flex;
    align-items: center;
    background: #f5f5f5;
}

.sep {
    display: block;
    width: 2px;
    height: 70px;
    background: #ccc;
    flex: none;
}

.ic {
    fill: none;
    stroke: #666;
    stroke-width: 2;
}

.ic .fill {
    fill: #666;
    stroke: none;
}

.ic .plus {
    stroke: #333;
    stroke-width: 5;
}

.ic.off {
    stroke: #b8b8b8;
}

.ic.off .fill {
    fill: #b8b8b8;
}

.ic.dash rect {
    stroke: #b8b8b8;
    stroke-dasharray: 4 3;
}

.ic .thin {
    stroke: #777;
    stroke-width: 1.200;
}

.caret {
    fill: #666;
}

.caret.off {
    fill: #bbb;
}

.pin-on {
    width: 60px;
    height: 60px;
    background: #e6e6e6;
    flex: none;
}

.tb-select {
    width: 267px;
    height: 46px;
    margin-left: 22px;
    border: 2px solid #d6d6d6;
    border-top-width: 3px;
    border-radius: 3px;
    display: flex;
    align-items: center;
    justify-content: flex-end;
    padding-right: 10px;
    flex: none;
}

.after-select {
    margin-left: 32px;
}

.tb-right {
    margin-left: auto;
    display: flex;
    align-items: center;
    padding-right: 57px;
}

.showme {
    margin-left: 36px;
}

.tb-right span {
    margin-left: 9px;
    font-family: Inter, sans-serif;
    font-size: 23.500px;
    color: #111;
}

/* middle */
.middle {
    flex: 1;
    display: flex;
    min-height: 0;
}

.panel {
    width: 680px;
    flex: none;
    background: #fafafa;
    border-top: 2px solid #ccc;
    border-right: 3px solid #ccc;
    display: flex;
    flex-direction: column;
    color: #444;
}

.panel-tabs {
    height: 57px;
    display: flex;
    flex: none;
}

.ptab {
    display: flex;
    align-items: center;
}

.bold {
    width: 373px;
    padding: 0 0 7px 36px;
    font-weight: 700;
    font-size: 26px;
    color: #333;
}

.other {
    flex: 1;
    padding: 0 20px 6px 24px;
    border-left: 2px solid #ccc;
    border-bottom: 3px solid #ccc;
    justify-content: space-between;
    font-size: 24.800px;
}

.sec {
    border-bottom: 2px solid #ccc;
    flex: none;
}

.sec-device {
    height: 196px;
    padding-top: 23px;
}

.dev {
    height: 38px;
    margin: 0 36px;
    display: flex;
    align-items: center;
    padding-bottom: 3px;
}

.dev-on {
    background: #e6e6e6;
    padding-left: 26px;
}

.dev-phone {
    padding-left: 46px;
    margin-bottom: 24px;
}

.preview-btn {
    width: 312px;
    height: 46px;
    margin-left: 182px;
    padding-bottom: 3px;
    border: 2px solid #ccc;
    display: flex;
    align-items: center;
    justify-content: center;
}

.sec-size {
    height: 147px;
    padding: 13px 36px 0;
}

.sec-title {
    height: 30px;
    line-height: 30px;
    font-weight: 700;
    font-size: 26px;
    color: #333;
}

.size-select {
    height: 44px;
    margin-top: 15px;
    padding: 0 0 4px 2px;
    border-bottom: 2px solid #ccc;
    display: flex;
    align-items: center;
    justify-content: space-between;
    font-size: 25.600px;
}

.size-select svg {
    margin-right: 1px;
}

.sec-sheets {
    flex: 1;
    min-height: 0;
    padding-top: 13px;
}

.sec-sheets .sec-title {
    margin-left: 36px;
}

.sheet-list {
    margin-top: 25px;
}

.sheet-row {
    height: 40px;
    padding: 0 0 3px 39px;
    display: flex;
    align-items: center;
}

.sheet-hover {
    background: #f4f4f4;
}

.sheet-ic {
    fill: none;
    stroke: #666;
    stroke-width: 2;
}

.sheet-ic .badge {
    fill: #2f83a6;
    stroke: none;
}

.sheet-ic .badge-check {
    stroke: #fff;
}

.objets {
    height: 586px;
    flex: none;
    position: relative;
}

.objets-title {
    height: 50px;
    padding: 8px 0 0 24px;
    font-weight: 700;
    font-size: 27.500px;
    color: #333;
}

.obj-list {
    height: 421px;
    overflow: hidden;
    position: relative;
}

.obj-row {
    height: 40px;
    padding-left: 32px;
    display: flex;
    align-items: center;
    font-size: 24.500px;
    color: #444;
}

.obj-cut {
    margin-top: -27px;
}

.obj-ic {
    width: 24px;
    height: 24px;
    margin-right: 15px;
    fill: none;
    stroke: #555;
    stroke-width: 1.500;
}

.obj-scroll {
    position: absolute;
    left: 634px;
    top: 120px;
    width: 14px;
    height: 286px;
    background: #808080;
    border-radius: 7px;
}

.seg {
    display: flex;
    margin: 4px 0 0 24px;
    width: 628px;
    height: 47px;
}

.seg-on, .seg-off {
    flex: 1;
    display: flex;
    align-items: center;
    justify-content: center;
    padding-bottom: 3px;
    border-radius: 2px;
}

.seg-on {
    background: #06618c;
    color: #fff;
    font-weight: 700;
}

.seg-off {
    background: #fff;
    border: 2px solid #888;
}

.check-row {
    margin: 18px 0 0 36px;
    display: flex;
    align-items: center;
    font-size: 24.700px;
}

.checkbox {
    display: block;
    width: 28px;
    height: 28px;
    margin-right: 13px;
    border: 2px solid #444;
    background: #fff;
    border-radius: 2px;
}

/* dashboard */
.canvas {
    flex: 1;
    min-width: 0;
}

.dashboard {
    width: 1998px;
    height: 1600px;
    background: #fff;
    padding: 13px 0 0 10px;
    display: flex;
    position: relative;
}

.zone {
    position: relative;
}

.zone-map {
    width: 992px;
    height: 1573px;
    border: 5px solid #666;
    border-right-width: 3px;
    padding: 0 8px 0 7px;
    flex: none;
}

.sheet-title {
    font-size: 43.300px;
    line-height: 60px;
    color: #333;
    white-space: nowrap;
}

.map-title {
    height: 93px;
    padding: 12px 0 0 7px;
}

.map {
    height: 1462px;
    position: relative;
    overflow: hidden;
    box-shadow: inset 0 0 0 1px #e8e8e8;
}

.map-svg {
    width: 100%;
    height: 100%;
}

.map-svg * {
    vector-effect: non-scaling-stroke;
}

.rough {
    filter: url(#rough);
}

.land {
    fill: #ededed;
}

#borders path {
    vector-effect: non-scaling-stroke;
}

.halo {
    stroke: #fafafa;
    stroke-width: 5;
    opacity: 0.8;
}

.line {
    stroke: #8f8f8f;
    stroke-width: 1.300;
}

.fr path {
    stroke: #d8dde3;
    stroke-width: 0.800;
}

.fr-base {
    fill: #dce3ea;
}

.t-dark { fill: #d6dde6; }
.t-mid { fill: #d9e0e8; }
.t-light { fill: #e0e6ec; }
.t-pale { fill: #e8edf1; }
.t-white { fill: #f2eff0; }
.t-white2 { fill: #f4ebe9; }
.t-pink { fill: #e6d2d8; }
.t-pink2 { fill: #ecc9cf; }
.t-corse { fill: #cdd6df; }

.nievre {
    fill: #3d6797;
    stroke: #111;
    stroke-width: 3;
}

.map-label {
    position: absolute;
    font-family: 'Open Sans', sans-serif;
    color: #808080;
    text-align: center;
    text-shadow: 0 0 3px #fff, 0 0 3px #fff;
    white-space: nowrap;
    line-height: 38px;
}

.l-uk { left: 189px; top: 166px; font-size: 30px; }
.l-nl { left: 553px; top: 196px; font-size: 30px; }
.l-be { left: 524px; top: 332px; font-size: 30px; }
.l-de { left: 811px; top: 267px; font-size: 35px; }
.l-fr { left: 419px; top: 673px; font-size: 32px; color: #a9aeb5; }
.l-es { left: 70px; top: 1147px; font-size: 36px; }

.map-credit {
    position: absolute;
    left: 6px;
    bottom: 3px;
    padding: 2px 6px;
    background: rgba(255,255,255,0.7);
    font-family: 'Liberation Sans', sans-serif;
    font-size: 16px;
    color: #444;
    line-height: 20px;
}

.map-unknown {
    position: absolute;
    right: 12px;
    bottom: 9px;
    width: 177px;
    height: 28px;
    background: rgba(170,170,170,0.85);
    border-radius: 4px;
    font-family: 'Liberation Sans', sans-serif;
    font-weight: 700;
    font-size: 21px;
    line-height: 28px;
    letter-spacing: 1px;
    color: #fff;
    text-align: center;
}

.zone-handle {
    position: absolute;
    left: 441px;
    top: -4px;
    width: 100px;
    height: 24px;
    background: #666;
    border-radius: 0 0 4px 4px;
    padding: 6px 9px 0;
    z-index: 3;
}

.zone-handle i {
    display: block;
    height: 2px;
    background: #fff;
    margin-bottom: 4px;
}

.zone-tools {
    position: absolute;
    left: 984px;
    top: -5px;
    width: 41px;
    height: 168px;
    background: #666;
    border-radius: 0 3px 3px 0;
    z-index: 3;
}

.zone-bar {
    flex: 1;
    min-width: 0;
}

.bar-title {
    height: 96px;
    padding: 16px 0 0 8px;
}

.viz {
    width: 968px;
    margin: 0 0 0 3px;
}

.viz-head, .viz-row, .viz-axis {
    display: flex;
}

.col-region {
    width: 333px;
    padding-left: 7px;
    white-space: nowrap;
}

.col-dep {
    width: 149px;
}

.col-chart {
    width: 486px;
    border-left: 2px solid #ccc;
    border-right: 2px solid #ccc;
}

.viz-head {
    height: 41px;
    align-items: flex-end;
    color: #333;
    font-size: 25px;
}

.viz-head .col-chart {
    height: 100%;
}

.head-cell {
    font-weight: 700;
    line-height: 38px;
}

.viz-row {
    height: 42px;
    border-top: 3px solid #ccc;
    border-bottom: 3px solid #ccc;
    align-items: center;
    font-size: 26px;
    color: #555;
}

.bar-cell {
    height: 100%;
    display: flex;
    align-items: center;
    position: relative;
    border-left: none;
}

.bar {
    height: 30px;
    position: relative;
}

.bar-f {
    width: 221px;
    background: #f28e2b;
}

.bar-m {
    width: 240px;
    background: #4e79a7;
}

.tick {
    position: absolute;
    top: 0;
    bottom: 0;
    width: 1px;
    background: #eee;
}

.short {
    bottom: auto;
    height: 8px;
}

.t1 { left: 114px; }
.t2 { left: 226px; }
.t3 { left: 340px; }

.axis-cell {
    height: 108px;
    position: relative;
    font-size: 25px;
    color: #666;
}

.axis-labels {
    display: flex;
    justify-content: space-between;
    padding: 14px 5px 0 3px;
}

.axis-title {
    margin-top: 16px;
    text-align: center;
    font-weight: 700;
    color: #333;
}

/* tooltip */
.tip {
    position: absolute;
    left: 568px;
    top: 745px;
    width: 767px;
    height: 306px;
    background: #fff;
    border: 2px solid #ddd;
    box-shadow: 3px 4px 6px rgba(0,0,0,0.35);
    z-index: 5;
}

.tip-head {
    height: 59px;
    background: #f5f5f5;
    display: flex;
    align-items: center;
    padding: 0 0 2px 18px;
    position: relative;
    color: #333;
    font-size: 25.200px;
}

.tip-act {
    display: flex;
    align-items: center;
}

.tip-act svg {
    margin-right: 13px;
}

.act-ex {
    margin-left: 36px;
}

.act-ex svg {
    margin-right: 10px;
}

.ti {
    margin-left: 39px;
}

.sign { margin-left: 45px; }
.link { margin-left: 53px; }
.carets { margin-left: 11px; }
.table { margin-left: 34px; }

.tip-body {
    padding: 14px 0 0 13px;
    display: grid;
    grid-template-columns: 278px 1fr;
    grid-auto-rows: 36px;
    align-items: center;
    font-size: 26.300px;
}

.tip-k {
    color: #777;
}

.tip-v {
    color: #333;
    font-size: 27px;
    -webkit-text-stroke: 0.3px #333;
}

/* tabs */
.tabs {
    height: 61px;
    flex: none;
    background: #e6e6e6;
    border-top: 2px solid #ccc;
    border-bottom: 3px solid #ccc;
    display: flex;
    font-size: 25.200px;
    color: #666;
    white-space: nowrap;
}

.tab {
    height: 56px;
    border-right: 2px solid #ccc;
    display: flex;
    align-items: center;
    flex: none;
}

.tab-src {
    width: 281px;
    padding-left: 19px;
}

.tab-src svg {
    margin-right: 11px;
}

.tab-a {
    width: 373px;
    padding-left: 12px;
}

.tab-b {
    width: 400px;
    padding-left: 12px;
}

.tab-active {
    width: 401px;
    padding-left: 16px;
    background: #fafafa;
    font-weight: 700;
    font-size: 26px;
    color: #555;
}

.tab-active svg {
    margin-right: 8px;
}

.tab-new {
    width: 64px;
    padding-left: 19px;
}

/* status */
.status {
    height: 41px;
    flex: none;
    display: flex;
    background: #ebebeb;
    font-size: 22px;
    color: #333;
}

.status-text {
    width: 2609px;
    display: flex;
    align-items: center;
    padding-left: 25px;
}

.st1 {
    width: 200px;
}

.st2 {
    width: 230px;
    font-size: 21px;
    word-spacing: 1px;
}

.st3 {
    font-size: 21px;
}

.st-cell {
    border-left: 2px solid #ccc;
    display: flex;
    align-items: center;
}

.c1 { width: 254px; }
.c2 { width: 54px; }
.c3 { width: 94px; }

.c4 {
    width: 142px;
    padding-left: 16px;
}

.c5 {
    flex: 1;
    padding-left: 17px;
}
```
